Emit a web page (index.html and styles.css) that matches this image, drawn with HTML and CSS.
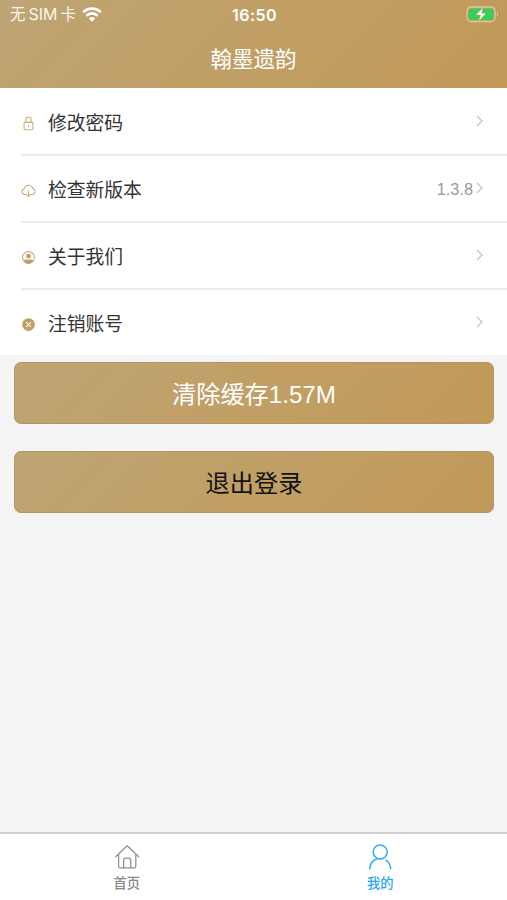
FILE: index.html
```
<!DOCTYPE html>
<html lang="zh-CN">
<head>
    <meta charset="UTF-8">
    <meta name="viewport" content="width=device-width, initial-scale=1.0">
    <title>翰墨遗韵</title>
    <link rel="stylesheet" href="styles.css">
</head>
<body>
    <header>
        <div class="status-bar">
            <div class="carrier">
                <span class="sim">无<span class="latin">SIM</span>卡</span>
                <svg class="wifi" width="20" height="15" viewBox="0 0 20 15">
                    <path d="M1.2 5.2a12.7 12.7 0 0 1 17.6 0" fill="none" stroke="#fff" stroke-width="2.9"/>
                    <path d="M4.4 8.7a8 8 0 0 1 11.2 0" fill="none" stroke="#fff" stroke-width="2.6"/>
                    <path d="M10 14.8l-3.1-3.3a4.5 4.5 0 0 1 6.2 0z" fill="#fff"/>
                </svg>
            </div>
            <span class="clock">16:50</span>
            <svg class="battery" width="34" height="17" viewBox="0 0 34 17">
                <rect x="2" y="1" width="28" height="14.5" rx="4" fill="none" stroke="#dfc8a2" stroke-width="1.3"/>
                <rect x="3.8" y="2.8" width="24.5" height="11" rx="2.3" fill="#32d158"/>
                <path d="M32 6.2c1.6.6 1.6 3.6 0 4.2z" fill="#dfc8a2"/>
                <path d="M18 1.4L10.9 9h4.6l-1.6 6 7.2-7.8h-4.5z" fill="#fff" stroke="#c3a262" stroke-width=".5"/>
            </svg>
        </div>
        <h1>翰墨遗韵</h1>
    </header>

    <ul class="menu">
        <li>
            <svg class="icon" viewBox="0 0 16 16" fill="none" stroke="#c9ab72" stroke-width="1.1">
                <rect x="3.3" y="6.8" width="9.4" height="7.9" rx="1"/>
                <path d="M5.2 6.6V4a2.8 3 0 0 1 5.6 0v2.6M8 9.7v2"/>
            </svg>
            <span class="label">修改密码</span>
            <svg class="arrow" viewBox="0 0 8 12"><path d="M1 1l5 5-5 5"/></svg>
        </li>
        <li>
            <svg class="icon" viewBox="0 0 16 16" fill="none" stroke="#c9ab72" stroke-width="1.1">
                <path d="M5.8 12.2H4a3.2 3.2 0 0 1-.4-6.3 4.6 4.6 0 0 1 8.9 0 3.2 3.2 0 0 1-.3 6.3h-1.9M8.1 8v5.8M5.8 12l2.3 2.2 2.3-2.2"/>
            </svg>
            <span class="label">检查新版本</span>
            <span class="version">1.3.8</span>
            <svg class="arrow" viewBox="0 0 8 12"><path d="M1 1l5 5-5 5"/></svg>
        </li>
        <li>
            <svg class="icon" viewBox="0 0 16 16">
                <circle cx="8" cy="8" r="6.3" fill="none" stroke="#c5a66c" stroke-width="1.1"/>
                <circle cx="8" cy="6.6" r="2.5" fill="#c0a066"/>
                <path d="M2.6 11c2-1 3.9-.7 5.4-.7s3.4-.3 5.4.7c-1 2.2-3 3.5-5.4 3.5s-4.4-1.3-5.4-3.5z" fill="#c0a066"/>
            </svg>
            <span class="label">关于我们</span>
            <svg class="arrow" viewBox="0 0 8 12"><path d="M1 1l5 5-5 5"/></svg>
        </li>
        <li>
            <svg class="icon" viewBox="0 0 16 16">
                <circle cx="8" cy="8" r="6.8" fill="#c0a066"/>
                <path d="M5.5 5.5l5 5M10.5 5.5l-5 5" stroke="#fff" stroke-width="1.2"/>
            </svg>
            <span class="label">注销账号</span>
            <svg class="arrow" viewBox="0 0 8 12"><path d="M1 1l5 5-5 5"/></svg>
        </li>
    </ul>

    <main>
        <button class="clear">清除缓存1.57M</button>
        <button class="logout">退出登录</button>
    </main>

    <nav>
        <a class="tab">
            <svg width="26" height="26" viewBox="0 0 26 26" fill="none" stroke="#929292" stroke-width="1.3" stroke-linecap="round" stroke-linejoin="round">
                <path d="M1.7 12.7L13.2 1.7l11.5 11"/>
                <path d="M4.6 11v11.4a1.5 1.5 0 0 0 1.5 1.5h14.2a1.5 1.5 0 0 0 1.5-1.5V11"/>
                <path d="M9.7 23.7v-7.5a2 2 0 0 1 2-2h3a2 2 0 0 1 2 2v7.5"/>
            </svg>
            <span>首页</span>
        </a>
        <a class="tab active">
            <svg width="26" height="26" viewBox="0 0 26 26" fill="none" stroke="#35aaf0" stroke-width="1.5" stroke-linecap="round">
                <circle cx="13.2" cy="8" r="7"/>
                <path d="M2.8 24.7c.5-4.9 3.2-8.7 7.4-9.9M19 16.1c2.8 1.9 4.3 4.9 4.7 8.6"/>
            </svg>
            <span>我的</span>
        </a>
    </nav>
</body>
</html>
```
FILE: styles.css
```
* {
    box-sizing: border-box;
}
body {
    margin: 0;
    height: 900px;
    display: flex;
    flex-direction: column;
    overflow: hidden;
    background-color: #f4f4f4;
    color: #333;
    font-family: "Liberation Sans", "Noto Sans CJK SC", sans-serif;
}
header {
    height: 88px;
    background: linear-gradient(135deg, #bea574 0%, #c19f65 50%, #c09957 100%);
    color: #fff;
}
.status-bar {
    height: 29px;
    padding: 0 8px 0 10px;
    display: grid;
    grid-template-columns: 1fr auto 1fr;
    align-items: center;
}
.carrier {
    display: flex;
    align-items: center;
    gap: 6px;
}
.sim {
    font-size: 15.5px;
    line-height: 29px;
    white-space: nowrap;
    color: #faf4e9;
}
.latin {
    margin: 0 3px;
    font-family: Inter, sans-serif;
    font-size: 16px;
}
.clock {
    font-family: Inter, sans-serif;
    font-size: 16px;
    font-weight: 600;
    letter-spacing: 0.5px;
}
.battery {
    justify-self: end;
}
h1 {
    margin: 0;
    padding-top: 2px;
    font-size: 21.5px;
    font-weight: 400;
    line-height: 58px;
    text-align: center;
}
.menu {
    list-style: none;
    margin: 0;
    padding: 1px 0 0 21px;
    background-color: #fff;
}
.menu li {
    height: 67px;
    padding-right: 23px;
    display: flex;
    align-items: center;
    border-bottom: 2px solid #ebebeb;
}
.menu li:last-child {
    height: 65px;
    border-bottom: none;
}
.icon {
    width: 15px;
    height: 15px;
    margin-top: 3px;
    flex: none;
}
.label {
    margin-left: 12px;
    flex: 1;
    font-size: 18.8px;
}
.version {
    margin: 1px 3px 0 0;
    font-size: 16.3px;
    color: #999;
}
.arrow {
    width: 8px;
    height: 12px;
    margin-top: -2px;
    fill: none;
    stroke: #c4c4c4;
    stroke-width: 1.3;
}
main {
    flex: 1;
    padding: 7px 13px 0 14px;
    display: flex;
    flex-direction: column;
    gap: 27px;
}
button {
    height: 62px;
    padding: 0 0 2px;
    border: 1px solid #b09567;
    border-radius: 7px;
    background: linear-gradient(135deg, #bea574 0%, #c19f65 50%, #c09957 100%);
    font-family: inherit;
    font-size: 24.2px;
}
.clear {
    color: #fff;
}
.logout {
    color: #111;
}
nav {
    height: 68px;
    display: flex;
    border-top: 2px solid #cfcfcf;
    background-color: #fff;
}
.tab {
    flex: 1;
    padding-top: 10px;
    display: flex;
    flex-direction: column;
    align-items: center;
    gap: 4px;
    font-size: 13.3px;
    font-weight: 500;
    line-height: 20px;
    color: #888;
}
.active {
    color: #2ca6f0;
}
```
